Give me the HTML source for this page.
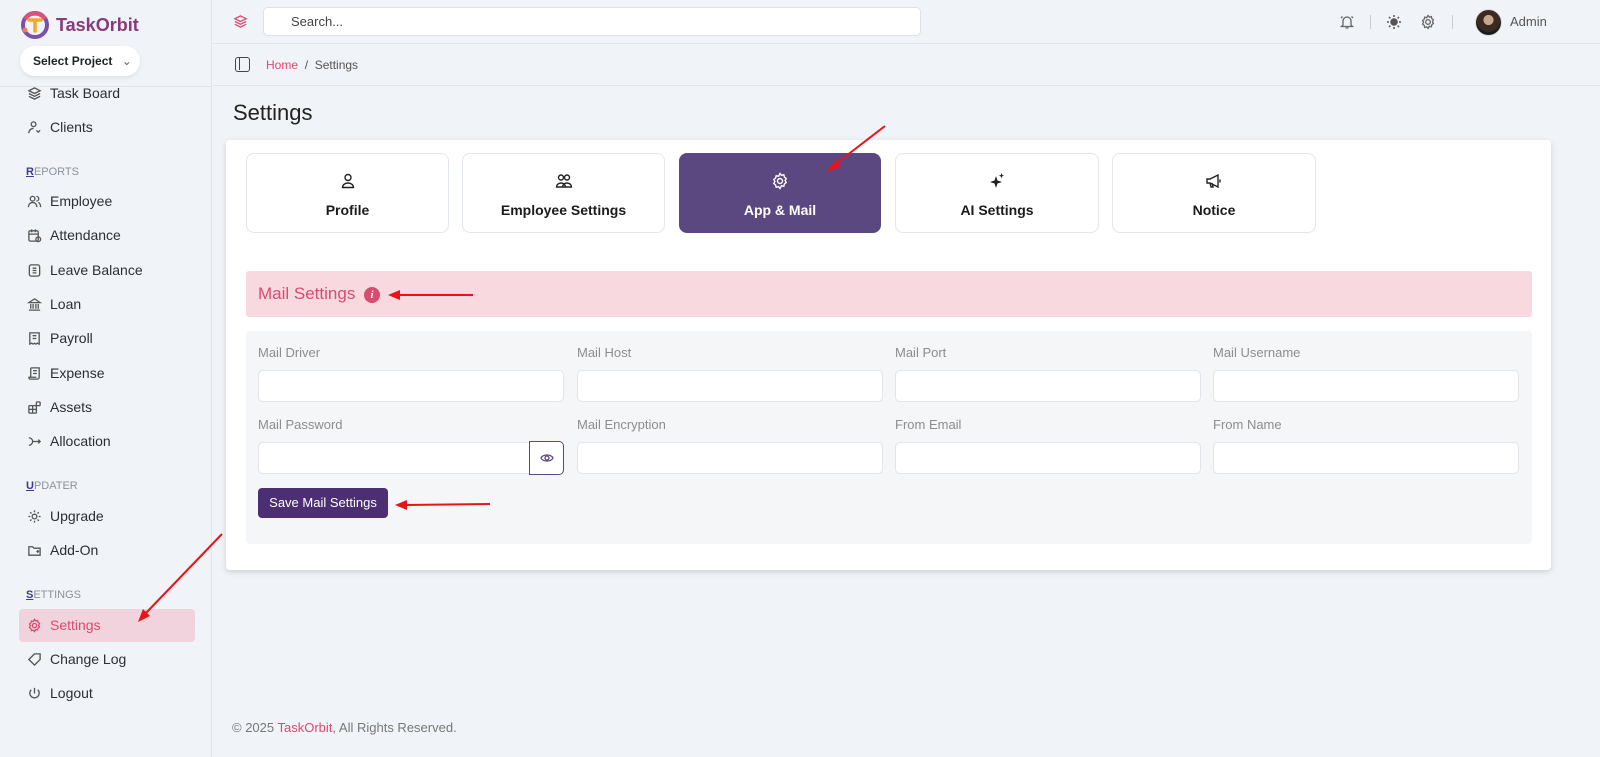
<!DOCTYPE html>
<html><head><meta charset="utf-8"><style>
*{box-sizing:border-box;margin:0;padding:0}
body{width:1600px;height:757px;overflow:hidden;background:#f0f3f7;font-family:"Liberation Sans",sans-serif;color:#212529;position:relative}
.sb{position:absolute;left:0;top:0;width:212px;height:757px;background:#f0f3f7;border-right:1px solid #e2e6ea}
.logo{position:absolute;left:20px;top:10px;display:flex;align-items:center;gap:6px}
.logo span{font-size:18px;font-weight:bold;color:#8a3a7a}
.sel{position:absolute;left:20px;top:46px;width:120px;height:30px;background:#fff;border-radius:15px;box-shadow:0 2px 5px rgba(0,0,0,.08);font-size:12px;font-weight:bold;line-height:30px;padding-left:13px}
.sbline{position:absolute;left:0;top:86px;width:212px;border-top:1px solid #e2e6ea}
.it{position:absolute;left:27px;font-size:14px;color:#2b2f33;display:flex;align-items:center;gap:8px;height:20px}
.it svg{width:15px;height:15px;fill:none;stroke:#555;stroke-width:1.4}
.hd{position:absolute;left:26px;font-size:11px;color:#8c929a}
.hd u{color:#3b3a8c;font-weight:bold}
.act{position:absolute;left:19px;top:609px;width:176px;height:33px;background:#f0d3dc;border-radius:4px}
.top{position:absolute;left:213px;top:0;right:0;height:44px;border-bottom:1px solid #e2e6ea}
.search{position:absolute;left:50px;top:7px;width:658px;height:29px;background:#fff;border:1px solid #dee2e6;border-radius:5px;font-size:13px;color:#444;line-height:27px;padding-left:27px}
.bc{position:absolute;left:213px;top:44px;right:0;height:42px;border-bottom:1px solid #e2e6ea;font-size:12px}
h1{position:absolute;left:233px;top:100px;font-size:22px;font-weight:normal;color:#222}
.card{position:absolute;left:226px;top:140px;width:1325px;height:430px;background:#fff;border-radius:4px;box-shadow:0 2px 6px rgba(0,0,0,.15)}
.tab{position:absolute;top:153px;height:80px;background:#fff;border:1px solid #e3e6ea;border-radius:8px;text-align:center;font-size:14px;font-weight:bold;color:#1b1b1b}
.tab svg{position:absolute;left:50%;top:18px;margin-left:-9px;width:18px;height:18px;fill:none;stroke:#222;stroke-width:1.4}
.tab div{position:absolute;left:0;right:0;top:48px}
.tab.on{background:#5c4880;border-color:#5c4880;color:#fff}
.tab.on svg{stroke:#fff}
.pink{position:absolute;left:246px;top:271px;width:1286px;height:46px;background:#f8d9df;border-radius:3px;font-size:17px;color:#d94b6f;line-height:46px;padding-left:12px}
.info{display:inline-block;width:16px;height:16px;border-radius:50%;background:#d94b6f;color:#fff;font-size:11px;font-weight:bold;font-style:italic;line-height:16px;text-align:center;vertical-align:1px;margin-left:4px;font-family:"Liberation Serif",serif}
.panel{position:absolute;left:246px;top:331px;width:1286px;height:213px;background:#f5f6f8;border-radius:4px}
.lb{position:absolute;font-size:13px;color:#8a8d91}
.in{position:absolute;width:306px;height:32px;background:#fff;border:1px solid #e1e4e8;border-radius:5px}
.btn{position:absolute;left:258px;top:488px;width:130px;height:30px;background:#4b2f72;border-radius:4px;color:#fff;font-size:13px;line-height:30px;text-align:center}
.foot{position:absolute;left:232px;top:720px;font-size:13px;color:#777}
</style></head><body>
<div class="sb">
 <div class="logo"><svg width="30" height="30" viewBox="0 0 30 30"><circle cx="15" cy="15" r="12" fill="none" stroke="#7a4fb0" stroke-width="4"/><path d="M5 9A12 12 0 0 1 25 9" stroke="#e0507a" stroke-width="4" fill="none"/><path d="M9 10h12M15 10v11" stroke="#f5a623" stroke-width="3.5" fill="none" stroke-linecap="round"/><circle cx="5" cy="20" r="2.5" fill="#f08040"/></svg><span>TaskOrbit</span></div>
 <div class="sel">Select Project <span style="font-weight:normal;color:#666;margin-left:6px">⌄</span></div>
 <div class="sbline"></div>
 <div class="it" style="top:83px"><svg viewBox="0 0 16 16"><path d="M8 2L2 5l6 3 6-3zM2 8l6 3 6-3M2 11l6 3 6-3"/></svg>Task Board</div>
 <div class="it" style="top:117px"><svg viewBox="0 0 16 16"><circle cx="7" cy="4.5" r="2.5"/><path d="M2 14c0-3 2-5 5-5M10 11l2 2 2-2"/></svg>Clients</div>
 <div class="hd" style="top:166px"><u>R</u>EPORTS</div>
 <div class="it" style="top:191px"><svg viewBox="0 0 16 16"><circle cx="6" cy="5" r="2.5"/><path d="M1.5 14c0-3 2-5 4.5-5s4.5 2 4.5 5M10 2.5a2.5 2.5 0 0 1 0 5M12 9c1.5.5 2.5 2.5 2.5 5"/></svg>Employee</div>
 <div class="it" style="top:225px"><svg viewBox="0 0 16 16"><rect x="2" y="3" width="10" height="11" rx="1.5"/><path d="M5 1.5v3M9 1.5v3M2 6.5h10"/><circle cx="12" cy="12" r="2.5"/></svg>Attendance</div>
 <div class="it" style="top:260px"><svg viewBox="0 0 16 16"><rect x="2.5" y="2" width="11" height="12" rx="2"/><path d="M6 5.5h4M6 8h4M6 10.5h4"/></svg>Leave Balance</div>
 <div class="it" style="top:294px"><svg viewBox="0 0 16 16"><path d="M2 6l6-4 6 4zM2 14h12M4 7.5v5M6.5 7.5v5M9.5 7.5v5M12 7.5v5"/></svg>Loan</div>
 <div class="it" style="top:328px"><svg viewBox="0 0 16 16"><path d="M3 2h10v12l-2-1-1.5 1-1.5-1-1.5 1L5 13l-2 1zM6 5h4M6 8h4"/></svg>Payroll</div>
 <div class="it" style="top:363px"><svg viewBox="0 0 16 16"><path d="M4 2h9v10a2 2 0 0 1-2 2H3a2 2 0 0 1-1-2h8M4 2v10M6.5 5h4M6.5 8h4"/></svg>Expense</div>
 <div class="it" style="top:397px"><svg viewBox="0 0 16 16"><rect x="2" y="6" width="8" height="8" rx="1"/><path d="M2 10h8M6 6v8"/><rect x="10" y="2" width="4" height="4" rx="1"/></svg>Assets</div>
 <div class="it" style="top:431px"><svg viewBox="0 0 16 16"><path d="M2 4a4 4 0 0 1 0 8M6 8h8M12 6l2 2-2 2"/></svg>Allocation</div>
 <div class="hd" style="top:480px"><u>U</u>PDATER</div>
 <div class="it" style="top:506px"><svg viewBox="0 0 16 16"><circle cx="8" cy="8" r="2.5"/><path d="M8 1.5v2M8 12.5v2M1.5 8h2M12.5 8h2M3.4 3.4l1.4 1.4M11.2 11.2l1.4 1.4M3.4 12.6l1.4-1.4M11.2 4.8l1.4-1.4"/></svg>Upgrade</div>
 <div class="it" style="top:540px"><svg viewBox="0 0 16 16"><path d="M2 4h4l1.5 1.5H14V13H2zM10 9h3M11.5 7.5v3"/></svg>Add-On</div>
 <div class="hd" style="top:589px"><u>S</u>ETTINGS</div>
 <div class="act"></div>
 <div class="it" style="top:615px;color:#d94b6f"><svg viewBox="0 0 16 16" style="stroke:#d94b6f"><circle cx="8" cy="8" r="2.3"/><path d="M8 1.5l1.3 1.6 2-.5.5 2 1.6 1.3-1 1.8 1 1.8-1.6 1.3-.5 2-2-.5L8 14.5l-1.3-1.6-2 .5-.5-2-1.6-1.3 1-1.8-1-1.8 1.6-1.3.5-2 2 .5z"/></svg>Settings</div>
 <div class="it" style="top:649px"><svg viewBox="0 0 16 16"><path d="M2 8l6-6h6v6l-6 6zM11 5h.01"/></svg>Change Log</div>
 <div class="it" style="top:683px"><svg viewBox="0 0 16 16"><path d="M8 2v6M4.5 4a5 5 0 1 0 7 0"/></svg>Logout</div>
</div>
<div class="top">
 <svg style="position:absolute;left:20px;top:14px" width="15" height="15" viewBox="0 0 16 16" fill="none" stroke="#d94b6f" stroke-width="1.4"><path d="M8 2L2 5l6 3 6-3zM2 8l6 3 6-3M2 11l6 3 6-3"/></svg>
 <div class="search">Search...</div>
 <svg style="position:absolute;left:1126px;top:14px" width="16" height="16" viewBox="0 0 16 16" fill="none" stroke="#666" stroke-width="1.3"><path d="M4 11V7a4 4 0 0 1 8 0v4l1.5 1.5h-11zM6.5 14h3M2 4l1.5-1.5M14 4l-1.5-1.5"/></svg>
 <div style="position:absolute;left:1157px;top:15px;height:14px;border-left:1px solid #ccc"></div>
 <svg style="position:absolute;left:1173px;top:14px" width="16" height="16" viewBox="0 0 16 16" stroke="#555" stroke-width="1.5"><circle cx="8" cy="8" r="3" fill="#555"/><path d="M8 1v2M8 13v2M1 8h2M13 8h2M3 3l1.4 1.4M11.6 11.6L13 13M3 13l1.4-1.4M11.6 4.4L13 3"/></svg>
 <svg style="position:absolute;left:1207px;top:14px" width="16" height="16" viewBox="0 0 16 16" fill="none" stroke="#666" stroke-width="1.3"><circle cx="8" cy="8" r="2.3"/><path d="M8 1.5l1.3 1.6 2-.5.5 2 1.6 1.3-1 1.8 1 1.8-1.6 1.3-.5 2-2-.5L8 14.5l-1.3-1.6-2 .5-.5-2-1.6-1.3 1-1.8-1-1.8 1.6-1.3.5-2 2 .5z"/></svg>
 <div style="position:absolute;left:1239px;top:15px;height:14px;border-left:1px solid #ccc"></div>
 <div style="position:absolute;left:1262px;top:9px;width:27px;height:27px;border-radius:50%;background:radial-gradient(circle at 50% 40%,#c9a58c 0 25%,#3a2a22 27% 60%,#1c1c1f 62%);border:1px solid #ddd"></div>
 <div style="position:absolute;left:1297px;top:14px;font-size:13px;color:#555">Admin</div>
</div>
<div class="bc">
 <div style="position:absolute;left:22px;top:13px;width:15px;height:15px;border:1.5px solid #444;border-radius:3px"><div style="position:absolute;left:3px;top:0;height:12px;border-left:1.5px solid #444"></div></div>
 <div style="position:absolute;left:53px;top:14px"><span style="color:#d94b6f">Home</span> <span style="color:#555">&nbsp;/&nbsp; Settings</span></div>
</div>
<h1>Settings</h1>
<div class="card"></div>
<div class="tab" style="left:246px;width:203px"><svg viewBox="0 0 18 18"><circle cx="9" cy="5.5" r="3"/><path d="M3.5 15.5a5.5 4.5 0 0 1 11 0z"/></svg><div>Profile</div></div>
<div class="tab" style="left:462px;width:203px"><svg viewBox="0 0 18 18"><circle cx="6" cy="5.5" r="2.5"/><circle cx="12" cy="5.5" r="2.5"/><path d="M1.5 15a4.5 4 0 0 1 9 0zM7.5 15a4.5 4 0 0 1 9 0z"/></svg><div>Employee Settings</div></div>
<div class="tab on" style="left:679px;width:202px"><svg viewBox="0 0 18 18"><circle cx="9" cy="9" r="2.5"/><path d="M9 1.5l1.5 1.8 2.3-.6.6 2.3 1.8 1.5-1.1 2 1.1 2-1.8 1.5-.6 2.3-2.3-.6L9 16.5l-1.5-1.8-2.3.6-.6-2.3-1.8-1.5 1.1-2-1.1-2 1.8-1.5.6-2.3 2.3.6z"/></svg><div>App &amp; Mail</div></div>
<div class="tab" style="left:895px;width:204px"><svg viewBox="0 0 18 18" style="fill:#222;stroke:none"><path d="M8 4l1.5 4.5L14 10l-4.5 1.5L8 16l-1.5-4.5L2 10l4.5-1.5zM13.5 1l.7 2 2 .7-2 .7-.7 2-.7-2-2-.7 2-.7z"/></svg><div>AI Settings</div></div>
<div class="tab" style="left:1112px;width:204px"><svg viewBox="0 0 18 18"><path d="M2 7h3l8-4v12l-8-4H2zM5 11l1 4h2l-1-4M15 7.5v3"/></svg><div>Notice</div></div>
<div class="pink">Mail Settings <span class="info">i</span></div>
<div class="panel"></div>
<div class="lb" style="left:258px;top:345px">Mail Driver</div>
<div class="lb" style="left:577px;top:345px">Mail Host</div>
<div class="lb" style="left:895px;top:345px">Mail Port</div>
<div class="lb" style="left:1213px;top:345px">Mail Username</div>
<div class="in" style="left:258px;top:370px"></div>
<div class="in" style="left:577px;top:370px"></div>
<div class="in" style="left:895px;top:370px"></div>
<div class="in" style="left:1213px;top:370px"></div>
<div class="lb" style="left:258px;top:417px">Mail Password</div>
<div class="lb" style="left:577px;top:417px">Mail Encryption</div>
<div class="lb" style="left:895px;top:417px">From Email</div>
<div class="lb" style="left:1213px;top:417px">From Name</div>
<div class="in" style="left:258px;top:442px;width:272px;border-radius:5px 0 0 5px"></div>
<div class="in" style="left:529px;top:441px;width:35px;height:34px;border:1px solid #5c4880;border-radius:0 5px 5px 0"><svg style="position:absolute;left:10px;top:10px" width="14" height="12" viewBox="0 0 14 12" fill="none" stroke="#5c4880" stroke-width="1.3"><path d="M1 6c2-4 10-4 12 0-2 4-10 4-12 0z"/><circle cx="7" cy="6" r="2"/></svg></div>
<div class="in" style="left:577px;top:442px"></div>
<div class="in" style="left:895px;top:442px"></div>
<div class="in" style="left:1213px;top:442px"></div>
<div class="btn">Save Mail Settings</div>
<div class="foot">© 2025 <span style="color:#d94b6f">TaskOrbit</span>, All Rights Reserved.</div>
<svg style="position:absolute;left:0;top:0" width="1600" height="757">
<g stroke="#e8141a" stroke-width="2" fill="#e8141a">
<line x1="885" y1="126" x2="833" y2="166"/><polygon points="826,172 836,160 841,167" stroke="none"/>
<line x1="473" y1="295" x2="398" y2="295"/><polygon points="388,295 400,290 400,300" stroke="none"/>
<line x1="490" y1="504" x2="405" y2="505"/><polygon points="395,505 407,500 407,510" stroke="none"/>
<line x1="222" y1="534" x2="145" y2="614"/><polygon points="138,622 143,609 150,616" stroke="none"/>
</g></svg>
</body></html>
